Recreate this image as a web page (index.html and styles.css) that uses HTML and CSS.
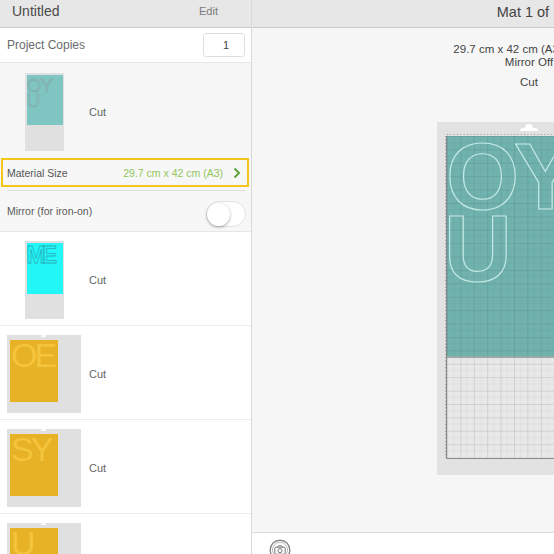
FILE: index.html
```html
<!DOCTYPE html>
<html>
<head>
<meta charset="utf-8">
<link rel="stylesheet" href="styles.css">
</head>
<body>
<div class="app">
  <aside class="side">
    <header class="side-head"><span class="title">Untitled</span><span class="edit">Edit</span></header>
    <div class="copies"><span class="label">Project Copies</span><div class="num">1</div></div>
    <div class="group">
      <div class="mat-item first">
        <div class="thumb-box">
          <div class="frame tall"><div class="paper teal"><div class="glyphs cutline">OY<br>U</div></div></div>
        </div>
        <span class="cut">Cut</span>
      </div>
      <div class="material">
        <span class="m-label">Material Size</span>
        <span class="m-size">29.7 cm x 42 cm (A3)</span>
        <svg class="chev" width="8" height="12" viewBox="0 0 8 12"><path d="M1.5 1.5 L6 6 L1.5 10.5" fill="none" stroke="#5fa33b" stroke-width="2"/></svg>
      </div>
      <div class="sep"></div>
      <div class="mirror"><span class="label small">Mirror (for iron-on)</span><div class="toggle"><div class="knob"></div></div></div>
    </div>
    <div class="mat-item">
      <div class="thumb-box">
        <div class="frame tall"><div class="paper cyan"><div class="glyphs me">ME</div></div></div>
      </div>
      <span class="cut">Cut</span>
    </div>
    <div class="mat-item">
      <div class="thumb-box">
        <div class="frame wide"><span class="hook"></span><div class="paper yellow"><div class="glyphs yel">OE</div></div></div>
      </div>
      <span class="cut">Cut</span>
    </div>
    <div class="mat-item">
      <div class="thumb-box">
        <div class="frame wide"><span class="hook"></span><div class="paper yellow"><div class="glyphs yel">SY</div></div></div>
      </div>
      <span class="cut">Cut</span>
    </div>
    <div class="mat-item">
      <div class="thumb-box">
        <div class="frame wide"><span class="hook"></span><div class="paper yellow"><div class="glyphs yel">U</div></div></div>
      </div>
      <span class="cut">Cut</span>
    </div>
  </aside>
  <main class="main">
    <header class="main-head">Mat 1 of 7</header>
    <div class="canvas">
      <div class="info">
        <div class="size-line">29.7 cm x 42 cm (A3)</div>
        <div>Mirror Off</div>
        <div class="mode">Cut</div>
      </div>
      <div class="mat">
        <svg width="184" height="353" viewBox="0 0 184 353">
          <defs>
            <pattern id="grid" x="10" y="14" width="13.4" height="13.4" patternUnits="userSpaceOnUse">
              <path d="M6.7 0 V13.4 M0 6.7 H13.4" stroke="rgba(70,70,70,0.07)" stroke-width="0.8"/>
              <path d="M0 0 V13.4 M0 0 H13.4" stroke="rgba(50,60,60,0.26)" stroke-width="1"/>
            </pattern>
            <pattern id="tickx" x="10" y="0" width="3.35" height="4" patternUnits="userSpaceOnUse">
              <rect x="0" y="0" width="1" height="2" fill="#777"/>
            </pattern>
            <pattern id="ticky" x="0" y="14" width="4" height="3.35" patternUnits="userSpaceOnUse">
              <rect x="0" y="0" width="2" height="1" fill="#777"/>
            </pattern>
          </defs>
          <rect x="0" y="0" width="184" height="353" fill="#e2e2e2"/>
          <path d="M83 9 h18 a3 3 0 0 0 -3 -3 h-2 a4 4 0 0 0 -8 0 h-2 a3 3 0 0 0 -3 3 z" fill="#ffffff"/>
          <rect x="10" y="14" width="161" height="322" fill="#e8e8e8"/>
          <rect x="10" y="14" width="157" height="221" fill="#70b2ae"/>
          <rect x="10" y="14" width="161" height="322" fill="url(#grid)"/>
          <rect x="10" y="234" width="157" height="2" fill="#9aa9a8"/>
          <path d="M9.5 14 V336.5 H171" fill="none" stroke="#8a8a8a" stroke-width="1"/>
          <rect x="10" y="11" width="161" height="2" fill="url(#tickx)" opacity="0.7"/>
          <rect x="7" y="14" width="2" height="322" fill="url(#ticky)" opacity="0.7"/>
          <text class="big" x="9" y="87">O</text>
          <text class="big" x="77" y="87">Y</text>
          <text class="big" x="7" y="159">U</text>
        </svg>
      </div>
    </div>
    <footer class="bottom">
      <svg width="22" height="22" viewBox="0 0 22 22">
        <circle cx="11" cy="11" r="9.8" fill="none" stroke="#8a8a8a" stroke-width="1.4"/>
        <circle cx="11" cy="11" r="7.6" fill="none" stroke="#b4b4b4" stroke-width="0.9"/>
        <rect x="5.8" y="8.2" width="10.4" height="7" rx="1.2" fill="none" stroke="#777" stroke-width="1"/>
        <path d="M8.6 8.2 L9.5 6.8 H12.5 L13.4 8.2" fill="none" stroke="#777" stroke-width="1"/>
        <circle cx="11" cy="11.7" r="2.1" fill="none" stroke="#777" stroke-width="1"/>
      </svg>
    </footer>
  </main>
</div>
</body>
</html>
```
FILE: styles.css
```css
html, body {
  margin: 0;
  padding: 0;
  overflow: hidden;
  background: #ffffff;
}

body {
  font-family: "Liberation Sans", Arial, sans-serif;
  color: #555;
}

.app {
  display: flex;
  width: 806px;
  height: 554px;
}

/* ---------- side panel ---------- */
.side {
  flex: none;
  width: 251px;
  height: 554px;
  overflow: hidden;
  border-right: 1px solid #d9d9d9;
  background: #ffffff;
}

.side-head {
  height: 27px;
  border-bottom: 1px solid #cbcbcb;
  background: #e7e7e7;
  display: flex;
  align-items: center;
  justify-content: space-between;
  padding: 0 33px 0 12px;
  box-sizing: border-box;
  height: 28px;
  padding-bottom: 5px;
}

.title {
  font-size: 14px;
  color: #4a4a4a;
}

.edit {
  font-size: 11px;
  color: #7a7a7a;
}

.copies {
  height: 34px;
  border-bottom: 1px solid #e6e6e6;
  display: flex;
  align-items: center;
  justify-content: space-between;
  padding: 0 6px 0 7px;
}

.label {
  font-size: 12px;
  color: #6a6a6a;
}

.label.small {
  font-size: 10.5px;
  color: #5a5a5a;
}

.num {
  width: 36px;
  height: 22px;
  border: 1px solid #dedede;
  border-radius: 3px;
  background: #fff;
  font-size: 11px;
  color: #444;
  line-height: 22px;
  text-align: center;
  padding-left: 4px;
  box-sizing: content-box;
}

.group {
  background: #f7f7f7;
}

.mat-item {
  height: 78px;
  display: flex;
  align-items: center;
  padding: 9px 0 6px 7px;
  border-bottom: 1px solid #ececec;
}

.mat-item.first {
  padding: 10px 0 7px 7px;
  border-bottom: none;
}

.thumb-box {
  width: 74px;
  height: 78px;
  display: flex;
  justify-content: center;
}

.frame {
  position: relative;
  height: 78px;
  background: #e0e0e0;
  box-sizing: border-box;
}

.frame.tall {
  width: 39px;
  padding: 2px 0 0 2px;
}

.frame.wide {
  width: 74px;
  padding: 5px 0 0 3px;
}

.hook {
  position: absolute;
  top: 0;
  left: 34px;
  width: 5px;
  height: 2px;
  border-radius: 2px 2px 0 0;
  background: #ffffff;
}

.paper {
  overflow: hidden;
}

.paper.teal {
  width: 36px;
  height: 50px;
  background: #7fc6c3;
}

.paper.cyan {
  width: 36px;
  height: 51px;
  background: #22f6f6;
}

.paper.yellow {
  width: 48px;
  height: 62px;
  background: #e8b226;
}

.glyphs {
  font-family: "Liberation Sans", Arial, sans-serif;
}

.glyphs.cutline {
  font-size: 19px;
  line-height: 15px;
  padding: 3px 0 0 0;
  letter-spacing: -1px;
  color: transparent;
  -webkit-text-stroke: 0.5px #86a09f;
}

.glyphs.me {
  font-size: 23px;
  line-height: 20px;
  padding: 2px 0 0 0;
  letter-spacing: -4px;
  font-weight: bold;
  color: transparent;
  -webkit-text-stroke: 0.8px #27b3bd;
}

.glyphs.yel {
  font-size: 34px;
  line-height: 30px;
  padding: 0 0 0 1px;
  letter-spacing: -3px;
  color: #f4c43c;
}

.cut {
  margin-left: 8px;
  font-size: 11px;
  color: #666;
}

.material {
  height: 25px;
  margin: 0 2px 0 1px;
  border: 2px solid #f4c61c;
  display: flex;
  align-items: center;
  padding: 0 6px 0 4px;
}

.m-label {
  font-size: 10.5px;
  color: #555;
  flex: 1;
}

.m-size {
  font-size: 10.5px;
  color: #93c65a;
  margin-right: 10px;
}

.chev {
  display: block;
}

.sep {
  height: 1px;
  margin: 3px 6px 0 7px;
  background: #dddddd;
}

.mirror {
  height: 40px;
  border-bottom: 1px solid #e6e6e6;
  display: flex;
  align-items: center;
  justify-content: space-between;
  padding: 0 5px 0 7px;
}

.toggle {
  width: 38px;
  height: 24px;
  margin-top: 6px;
  border: 1px solid #e2e2e2;
  border-radius: 13px;
  background: #ffffff;
  position: relative;
}

.knob {
  width: 23px;
  height: 23px;
  border-radius: 50%;
  background: #ffffff;
  box-shadow: 0 1px 3px rgba(0, 0, 0, 0.35);
  margin: 0.5px 0 0 0;
}

/* ---------- main ---------- */
.main {
  flex: none;
  width: 554px;
  height: 554px;
  display: flex;
  flex-direction: column;
  overflow: hidden;
  background: #f6f6f6;
}

.main-head {
  flex: none;
  height: 27px;
  border-bottom: 1px solid #cbcbcb;
  background: #e7e7e7;
  font-size: 14.5px;
  color: #444;
  line-height: 24px;
  padding-bottom: 3px;
  box-sizing: content-box;
  height: 24px;
  text-align: center;
}

.canvas {
  flex: none;
  height: 504px;
  display: flex;
  flex-direction: column;
  align-items: center;
}

.info {
  padding-top: 15px;
  font-size: 11.5px;
  line-height: 13px;
  color: #444;
  text-align: center;
}

.size-line {
  padding-right: 42px;
}

.info .mode {
  margin-top: 7px;
}

.mat {
  margin-top: 33px;
  width: 184px;
  height: 353px;
}

.mat svg {
  display: block;
}

.big {
  font-family: "Liberation Sans", Arial, sans-serif;
  font-size: 94px;
  font-weight: bold;
  fill: none;
  stroke: #c2e8e4;
  stroke-width: 1.2;
}

.bottom {
  flex: none;
  height: 40px;
  border-top: 1px solid #dcdcdc;
  background: #ffffff;
  padding: 6px 0 0 17px;
}

.bottom svg {
  display: block;
}
```
